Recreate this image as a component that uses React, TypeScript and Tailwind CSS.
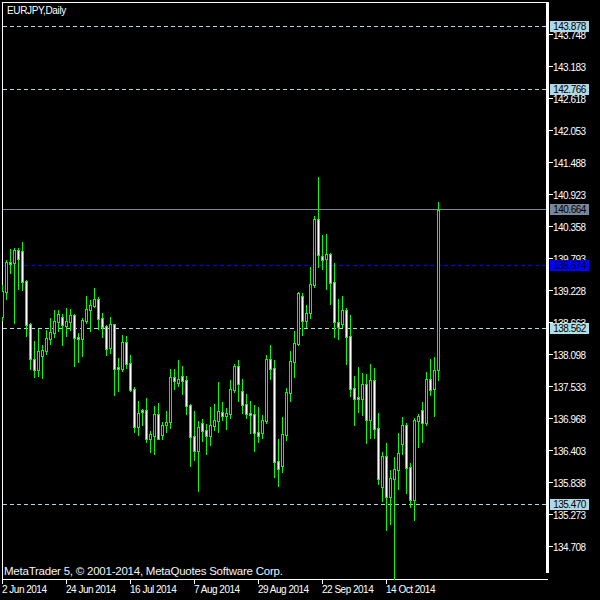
const G = "#00ff00";
// x, high, bodyTop, bodyBottom, low, white body
const candles: [number, number, number, number, number, number][] = [
  [2,285,291,317,320,0],[6,260,262,292,299,0],[10,249,262,264,273,1],[14,248,250,263,323,0],[18,248,250,259,289,1],
  [22,242,251,282,290,1],[26,280,281,325,336,1],[30,323,324,359,369,1],[34,341,359,370,377,1],[38,329,351,370,376,0],
  [42,345,350,356,378,0],[46,330,338,351,354,0],[50,318,332,339,344,0],[54,310,321,333,337,0],[58,310,314,322,331,0],
  [62,314,317,325,345,1],[66,308,321,326,336,0],[70,309,315,322,330,0],[74,314,315,338,366,1],[78,333,337,339,362,1],
  [82,318,320,339,356,0],[86,296,309,321,323,0],[90,300,305,310,331,0],[94,288,299,306,307,0],[98,297,299,319,329,1],
  [102,313,318,327,337,1],[106,325,326,349,355,1],[110,317,324,348,353,0],[114,324,324,369,395,1],[118,358,367,369,391,1],
  [122,335,342,369,371,0],[126,336,342,364,368,1],[130,355,363,390,391,1],[134,387,389,427,432,1],[138,401,413,427,435,0],
  [142,409,410,412,425,1],[146,398,410,439,442,1],[150,431,434,439,452,0],[154,406,414,436,454,0],[158,403,414,439,439,1],
  [162,422,425,435,439,0],[166,411,422,425,432,0],[170,369,377,422,428,0],[174,369,377,381,389,1],[178,360,379,383,386,0],
  [182,366,376,381,394,1],[186,376,380,406,414,1],[190,404,405,437,466,1],[194,411,436,451,460,1],[198,421,427,451,491,0],
  [202,419,423,431,441,1],[206,424,430,436,454,1],[210,407,425,436,445,0],[214,404,420,426,430,0],[218,382,411,421,432,0],
  [222,402,412,416,420,1],[226,408,413,416,429,0],[230,380,389,414,418,0],[234,364,366,390,392,0],[238,360,366,384,401,1],
  [242,379,391,405,413,1],[246,394,404,414,418,1],[250,401,413,415,433,1],[254,405,414,433,451,1],[258,407,432,436,442,1],
  [262,415,420,433,438,0],[266,355,359,421,423,0],[270,345,359,369,379,1],[274,360,368,462,477,1],[278,439,461,469,486,1],
  [282,417,434,466,472,0],[286,388,392,435,440,0],[290,351,361,393,401,0],[294,331,343,362,377,0],[298,292,293,344,345,0],
  [302,293,296,321,335,1],[306,305,313,321,327,0],[310,267,284,313,318,0],[314,216,219,285,287,0],[318,177,219,255,267,1],
  [322,235,256,260,269,1],[326,234,254,259,289,0],[330,253,254,283,304,1],[334,263,282,322,337,1],[338,299,322,327,339,1],
  [342,296,310,324,327,0],[346,308,310,337,364,1],[350,315,336,389,396,1],[354,376,388,399,425,1],[358,367,397,399,412,1],
  [362,373,384,399,415,0],[366,374,384,420,443,1],[370,364,380,420,438,0],[374,368,380,429,438,1],[378,413,428,479,484,1],
  [382,452,456,487,501,0],[386,443,456,497,530,1],[390,470,478,497,524,0],[394,457,469,479,579,0],[398,433,453,470,489,0],
  [402,417,425,444,454,0],[406,423,425,468,493,1],[410,463,467,500,507,1],[414,418,420,500,520,0],[418,414,416,421,447,0],
  [422,402,410,423,442,1],[426,372,379,423,425,0],[430,359,379,390,395,1],[434,357,370,389,416,0],[438,202,210,370,380,0],
];

const priceTicks = ["143.748","143.183","142.618","142.053","141.488","140.923","140.358","139.793","139.228","138.663","138.098","137.533","136.968","136.403","135.838","135.273","134.708"];

const levels: { y: number; price: string; box: string; line: string; dash: string }[] = [
  { y: 26, price: "143.878", box: "bg-[#add8e6]", line: "#a4dae8", dash: "4 3" },
  { y: 89, price: "142.766", box: "bg-[#add8e6]", line: "#a4dae8", dash: "4 3" },
  { y: 209, price: "140.664", box: "bg-[#778899]", line: "#778899", dash: "" },
  { y: 265, price: "139.674", box: "bg-[#0000ff]", line: "#0000ff", dash: "4 3" },
  { y: 328, price: "138.562", box: "bg-[#b0e0e6]", line: "#a8dee6", dash: "4 3" },
  { y: 504, price: "135.470", box: "bg-[#add8e6]", line: "#a4dae8", dash: "4 3" },
];

const dates = ["2 Jun 2014","24 Jun 2014","16 Jul 2014","7 Aug 2014","29 Aug 2014","22 Sep 2014","14 Oct 2014"];

export default function App() {
  return (
    <div className="w-[600px] h-[600px] bg-black overflow-hidden pt-[2px] pl-[2px] font-['Liberation_Sans',Arial,sans-serif] text-white text-[10px] tracking-[-0.5px] leading-none">
      <div className="flex h-[578px]">
        {/* plot */}
        <div className="relative w-[546px] h-[578px] border-l border-t border-b border-white">
          <svg className="absolute left-[-1px] top-[-1px]" width="546" height="578" viewBox="2 2 546 578" shapeRendering="crispEdges">
            {levels.map((l) => (
              <line key={l.y} x1="3" x2="546" y1={l.y + 0.5} y2={l.y + 0.5} stroke={l.line} strokeWidth="1" strokeDasharray={l.dash || undefined} />
            ))}
            {candles.map(([x, hi, top, bot, lo, white]) => (
              <g key={x}>
                <rect x={x} y={hi} width="1" height={lo - hi + 1} fill={G} />
                <rect x={x - 1} y={top} width="3" height={bot - top + 1} fill={G} />
                {bot - top > 1 && (
                  <rect x={x} y={top + 1} width="1" height={bot - top - 1} fill={white ? "#ffffff" : "#000000"} />
                )}
              </g>
            ))}
          </svg>
          <span className="absolute left-[4px] top-[2px] text-[10px] tracking-[-0.35px] leading-[12px]">EURJPY,Daily</span>
          <span className="absolute left-[1px] top-[561px] text-[11.5px] tracking-[-0.23px] leading-[14px] text-[#f0f4ff]">MetaTrader 5, © 2001-2014, MetaQuotes Software Corp.</span>
          <div className="absolute right-[-1px] top-[-1px] bottom-[6px] w-[3px] bg-white" />
        </div>
        {/* price axis */}
        <div className="relative flex-1 flex flex-col pt-[16.5px]">
          {priceTicks.map((p) => (
            <div key={p} className="h-[32.02px] flex items-center shrink-0">
              <div className="w-[4px] h-px bg-white ml-px" />
              <span className="pt-[2px]">{p}</span>
            </div>
          ))}
          {levels.map((l) => (
            <div
              key={l.y}
              className={`absolute left-[2px] w-[39px] h-[11px] flex items-center justify-center text-black ${l.box}`}
              style={{ top: l.y - 7 }}
            >
              {l.price}
            </div>
          ))}
        </div>
      </div>
      {/* time axis */}
      <div className="flex h-[20px]">
        {dates.map((d) => (
          <div key={d} className="w-[64px] shrink-0 flex flex-col">
            <div className="w-px h-[4px] bg-white" />
            <span className="mt-[1px] whitespace-nowrap">{d}</span>
          </div>
        ))}
      </div>
    </div>
  );
}
